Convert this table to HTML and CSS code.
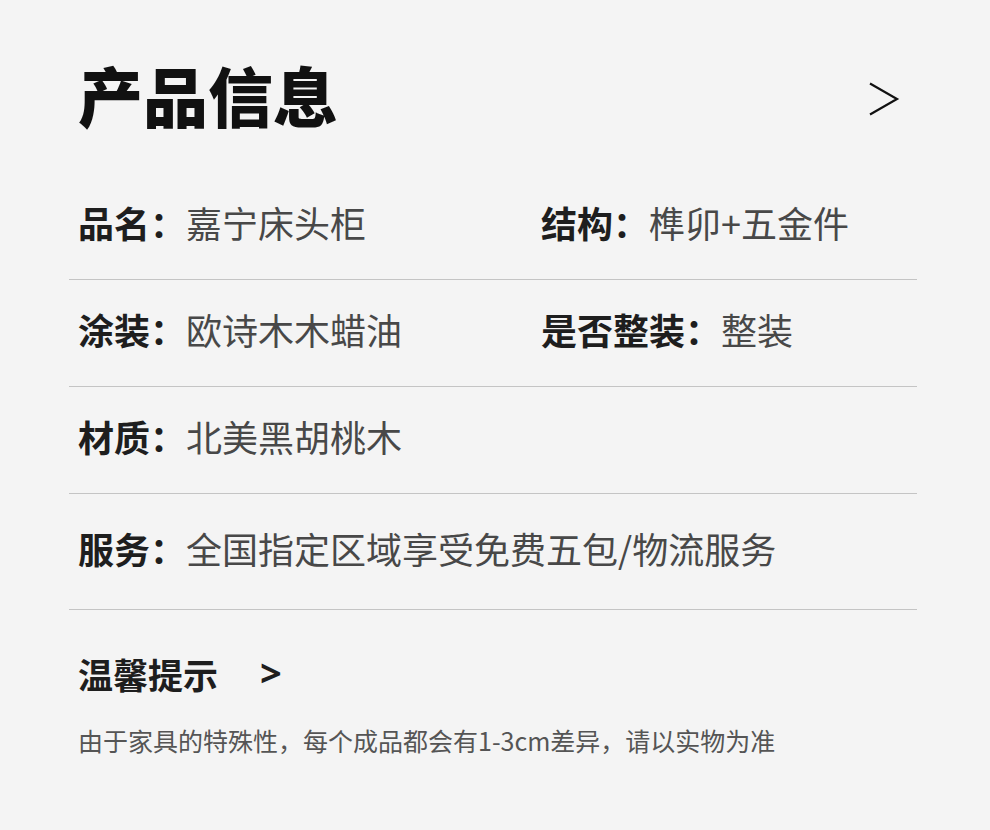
FILE: index.html
```html
<!DOCTYPE html>
<html lang="zh-CN">
<head>
<meta charset="utf-8">
<title>产品信息</title>
<link rel="stylesheet" href="styles.css">
</head>
<body>
<div class="page">
  <header class="header">
    <h1 class="title">产品信息</h1>
    <svg class="chev" width="32" height="34" viewBox="0 0 32 34">
      <polyline points="2,1.5 29,17 2,32.5" fill="none" stroke="#111" stroke-width="2.2"/>
    </svg>
  </header>
  <div class="row r1">
    <div class="cell"><span class="label">品名：</span><span class="value">嘉宁床头柜</span></div>
    <div class="cell"><span class="label">结构：</span><span class="value">榫卯+五金件</span></div>
  </div>
  <div class="row r2">
    <div class="cell"><span class="label">涂装：</span><span class="value">欧诗木木蜡油</span></div>
    <div class="cell"><span class="label">是否整装：</span><span class="value">整装</span></div>
  </div>
  <div class="row r3">
    <div class="cell"><span class="label">材质：</span><span class="value">北美黑胡桃木</span></div>
  </div>
  <div class="row r4">
    <div class="cell wide"><span class="label">服务：</span><span class="value">全国指定区域享受免费五包/物流服务</span></div>
  </div>
  <div class="tips">
    <div class="tips-head"><span>温馨提示</span><span class="arrow">&gt;</span></div>
    <p class="tips-text">由于家具的特殊性，每个成品都会有1-3cm差异，请以实物为准</p>
  </div>
</div>
</body>
</html>
```
FILE: styles.css
```css
* { box-sizing: border-box; }
html, body { margin: 0; padding: 0; }
body {
  background: #f4f4f4;
  font-family: "Noto Sans CJK SC", "Noto Sans", sans-serif;
  width: 990px;
  height: 830px;
  overflow: hidden;
}
.page {
  padding: 0 73px 0 69px;
}
.header {
  height: 172px;
  display: flex;
  justify-content: space-between;
  align-items: flex-start;
  padding: 62px 16px 0 9px;
}
.title {
  margin: 0;
  font-size: 65px;
  line-height: 64px;
  font-weight: 900;
  color: #111;
  letter-spacing: 0;
}
.chev {
  margin-top: 20px;
  margin-right: 1px;
}
.row {
  display: grid;
  grid-template-columns: 463px 1fr;
  align-items: center;
  padding-left: 9px;
  padding-bottom: 8px;
  border-bottom: 1px solid #c4c4c4;
}
.r1 { height: 108px; }
.r2 { height: 107px; }
.r3 { height: 107px; }
.r4 { height: 116px; }
.cell {
  display: flex;
  align-items: center;
  white-space: nowrap;
  font-size: 36px;
  line-height: 40px;
}
.cell.wide { grid-column: 1 / 3; }
.label {
  font-weight: 700;
  color: #1e1e1e;
}
.value {
  font-weight: 400;
  color: #484848;
}
.tips {
  padding-left: 9px;
}
.tips-head {
  margin-top: 44px;
  font-size: 35px;
  line-height: 40px;
  font-weight: 700;
  color: #1e1e1e;
  display: flex;
  align-items: center;
}
.arrow {
  margin-left: 42px;
  font-family: "Noto Sans", sans-serif;
  font-weight: 700;
  font-size: 38px;
  line-height: 40px;
  position: relative;
  top: -2px;
}
.tips-text {
  margin: 31px 0 0;
  font-size: 25px;
  line-height: 30px;
  color: #555;
}
```
